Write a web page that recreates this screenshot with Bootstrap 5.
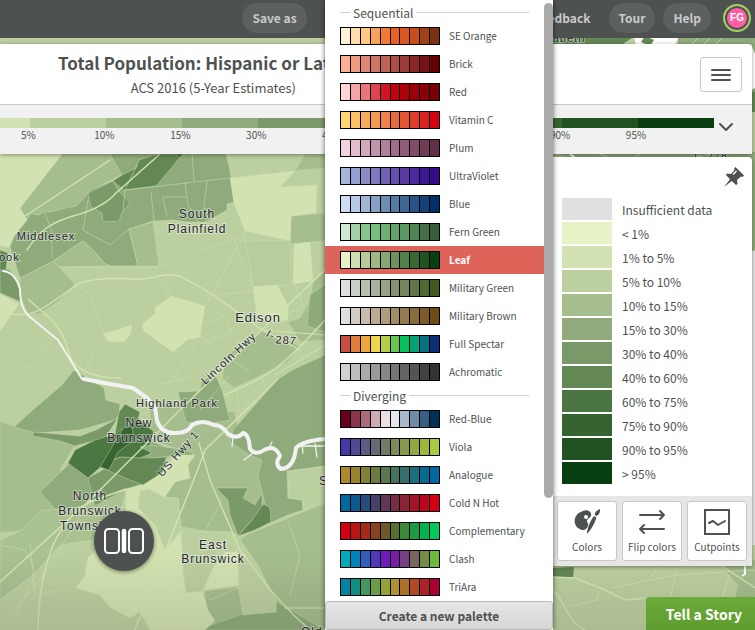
<!DOCTYPE html>
<html lang="en">
<head>
<meta charset="utf-8">
<meta name="viewport" content="width=device-width, initial-scale=1">
<title>Total Population: Hispanic or Latino</title>
<link href="https://cdn.jsdelivr.net/npm/bootstrap@5.3.0/dist/css/bootstrap.min.css" rel="stylesheet">
<style>
:root{--ink:#4d5250;--line:#c8c8c8}
body{font-family:"Noto Sans CJK SC","Open Sans",sans-serif;color:var(--ink);font-size:12px;line-height:16px;background:#bccf9f}
.app{isolation:isolate}
.map-layer{z-index:-1}
.map-layer text{font-family:"Liberation Sans",Arial,sans-serif;fill:#26262e;stroke:#ffffff70;stroke-width:2;paint-order:stroke;letter-spacing:1px}
.map-fade{z-index:-1;height:80px;background:linear-gradient(transparent,#00000018)}
.topbar{background:var(--ink);height:38px;padding-top:3px}
.pill{height:30px;line-height:16px;font-size:12px;font-weight:700;color:#c8cac9;background:#5c605f;border:0;border-radius:15px;padding:0 10px}
.pill-plain{background:none}
.avatar{width:28px;height:28px;border:2px solid #9bd35a;border-radius:50%;background:#ff5fa2;box-shadow:inset 0 0 0 2px var(--ink);color:#fff;font:bold 10px/14px "Liberation Sans",Arial,sans-serif}
.title-card{margin:6px 3px 0 0;border-radius:0 4px 0 0;box-shadow:0 1px 4px #0006}
.title-row{height:61px;border-bottom:1px solid var(--line)}
.map-title{font-size:17px;line-height:24px;font-weight:700}
.map-sub{font-size:13px;line-height:18px}
.menu-btn{width:42px;height:35px;margin-right:10px;border:1px solid var(--line);border-radius:3px;background:#fff}
.scale-row{background:#f1f1f1;height:49px;padding-top:13px}
.seg{height:10px;background:var(--c)}
.seg-wrap{flex:1 1 0}
.seg-wrap:first-child{flex-grow:.4}
.seg-label{width:36px;margin-right:-16px;font-size:10px;line-height:14px;text-align:center}
.scale-toggle{width:38px;background:none;border:0}
.legend-panel{width:200px;margin:3px 3px 0 auto;border-radius:0 4px 0 0;box-shadow:0 1px 4px #0006}
.legend-head{height:41px;padding:10px 8px}
.legend-rows{padding:0 10px 10px;margin:0}
.legend-rows li{height:24px;gap:10px}
.legend-chip{width:50px;height:22px;background:var(--c)}
.tools{background:#e6e6e6;padding:5px;gap:5px}
.tool{flex:1 1 0;height:60px;background:#fff;border:1px solid var(--line);border-radius:3px;font-size:10px;line-height:14px;color:var(--ink);padding:0}
.palette-menu{left:325px;width:228px;background:#fff;box-shadow:0 0 5px #0009;padding-top:3px;z-index:5}
.palette-list{margin-right:9px}
.group-title{height:19px;font-size:12px;line-height:18px;margin:0 15px}
.group-title::before,.group-title::after{content:"";height:1px;background:#d0d0d0;width:10px}
.group-title::after{flex:1}
.group-title span{padding:0 3px}
.pal{height:28px;border:0;background:none;padding:0 15px;gap:9px;font-size:10px;line-height:16px;color:var(--ink)}
.pal.active{background:#de6459;color:#fff;font-weight:700}
.strip{flex:0 0 100px;height:18px;border:1px solid #000}
.strip i{flex:1 1 0}
.strip i+i{border-left:1px solid #000}
.scroll-thumb{top:3px;right:0;width:9px;height:495px;border-radius:5px;background:#aaa}
.new-pal{height:29px;border:1px solid #bbb;border-radius:3px;background:linear-gradient(#e6e6e6,#d6d6d6);font-size:12px;line-height:18px;font-weight:700;color:var(--ink)}
.compare{left:94px;top:511px;width:60px;height:60px;border:0;border-radius:50%;background:var(--ink);box-shadow:0 1px 4px #0007}
.story{right:0;bottom:0;height:33px;border:0;border-radius:4px 0 0 0;background:linear-gradient(#6aab38,#5f9c30);color:#fff;font-size:14px;line-height:22px;font-weight:700;padding:0 13px 0 20px}
</style>
<script src="https://cdn.jsdelivr.net/npm/bootstrap@5.3.0/dist/js/bootstrap.bundle.min.js"></script>
</head>
<body>
<div class="app position-relative min-vh-100 overflow-hidden">
<svg class="map-layer position-absolute top-0 start-0 w-100 h-100" viewBox="0 0 755 630" preserveAspectRatio="xMinYMin slice" aria-label="Map of census areas">
<rect width="755" height="630" fill="#bccf9f"/>
<g stroke="#d0dfb5" stroke-width=".6" stroke-opacity=".7" stroke-linejoin="round">
<g fill="#a6bd8d">
<path d="M62 154H110L123 174 100 186 88 195 75 208 45 213 30 216 27 221 20 208Z"/>
<path d="M20 278L53 261 60 268 75 284 60 300 40 314 28 314 20 296Z"/>
<path d="M295 171L305 154H325V168ZM291 216L325 213V241L290 244Z"/>
<path d="M235 240L290 241 291 284 253 287 250 272 241 255Z" fill="#b9cc9c"/>
<path d="M313 281L325 270V340L300 342 288 322 300 318 310 300Z"/>
<path d="M226 356L262 330 300 346 288 362 262 375 234 388 222 378Z"/>
<path d="M0 421L35 433 75 445 60 470 90 500 68 520 60 540 38 536 28 543 20 531 0 533Z"/>
<path d="M20 531L42 510 66 509 100 488 126 490 120 515 92 540 60 545 36 572 0 600V540Z" fill="#aac191"/>
<path d="M150 400L180 404 235 412 240 440 262 460 264 475 272 520 240 536 230 532 205 531 181 527 178 498 165 497 168 480 195 455 150 440Z"/>
<path d="M246 535L325 503V630H300L278 605 258 565 240 540Z"/>
<path d="M203 591L239 587 243 610 277 602 300 630H205Z"/>
</g>
<g fill="#8fab7b">
<path d="M10 247L14 236 27 220 31 213 38 215 44 212 50 212 66 208 76 206 84 198 88 193 90 190 110 182 122 175 110 154H226L230 170 234 202 227 204 227 210 206 222 190 222 173 220 153 221 129 229 138 266H110L104 263 94 251 83 241 53 261 20 278Z"/>
<path d="M0 221H5L2 247 0 247Z"/>
<path d="M62 385L74 370 104 388 106 400 120 404 119 415 115 420 80 430 35 433 14 427 35 408Z"/>
<path d="M40 492L70 463 88 478 150 440 172 450 155 480 126 490 75 508 55 509Z"/>
<path d="M178 392L200 391 202 381 215 374 222 390 230 420 205 424 186 422Z"/>
<path d="M325 355L292 370 277 380 233 430 230 442 250 455 262 460 258 475 264 500 270 523 288 515 303 510 302 500 288 498 287 471 325 466Z"/>
<path d="M310 295L325 284V332L307 326ZM150 445L186 450 195 455 150 458Z"/>
<path d="M277 602L325 630H205L208 626 240 615Z"/>
</g>
<g fill="#a6bd8d">
<path d="M153 222L159 266H138L129 229ZM53 261L83 241 94 251 104 263 110 266 59 267Z"/>
</g>
<g fill="#d2e2b0">
<path d="M0 154H62L20 208 27 220 14 236 9 247 0 246Z"/>
<path d="M230 178L295 171 280 187 260 204 256 225 245 231 234 203ZM280 187L317 185 316 213 291 216 290 241 245 231 256 225 260 204Z"/>
<path d="M294 244L310 242 313 281 293 284ZM253 287L277 285 288 305 288 320 272 322 257 318Z"/>
<path d="M142 325L155 313V308L171 296 205 306 200 337 187 340 173 352 144 331ZM103 334L132 325 130 335 124 342 108 341Z"/>
<path d="M0 294L19 304 0 331Z"/>
<path d="M126 489L155 478 164 470 175 455H195L188 465 190 478 175 482 165 497 150 489 140 490 138 507 155 525 165 550 181 532 183 573 187 593 203 591 208 610 215 621 205 630H150L140 612 130 618 110 607 100 595 76 588 85 575 88 558 98 548 115 545 126 510Z"/>
</g>
<g fill="#bccf9f">
<path d="M140 492L148 489 165 498 178 498 181 530 165 550 155 525 138 508ZM181 532L230 532 222 552 215 555 210 590 186 593 183 573Z"/>
<path d="M289 476L294 471 325 466V500L304 509 302 500 288 498ZM232 535L246 550 276 600 276 612 243 615 238 585 237 552Z"/>
<path d="M236 388L268 374 250 400 240 415Z"/>
</g>
<path fill="#d2e2b0" d="M213 568L225 552 237 552 239 585 203 590Z"/>
<g fill="#7a9a69">
<path d="M88 193L113 181 118 190 130 203 122 212 119 221 103 222 102 213 91 207Z"/>
<path d="M0 268L10 270 19 285 21 302 0 293ZM33 432L80 436 96 430 118 418 105 438 75 446 60 441 33 436Z"/>
<path d="M88 478L112 465 143 484 126 489 95 506Z"/>
<path d="M216 488L248 488 243 498 255 505 262 493 262 510 252 520 238 536 230 515 228 500Z"/>
</g>
<g fill="#638854">
<path d="M113 181L122 175 136 168 139 160 158 154H183L156 186 124 190Z"/>
<path d="M0 250L8 253 6 270H0ZM119 412L125 404 140 412 135 428 115 434Z"/>
<path d="M100 467L120 457 150 458 166 457 163 472 143 485 125 478Z"/>
<path d="M238 536L252 520 262 506 264 504 270 508 271 522 255 530Z"/>
</g>
<g fill="#4b7742"><path d="M68 463L75 450 95 440 115 434 138 418 154 432 150 445 140 447 152 453 140 458 120 457 103 465 88 478ZM175 154H183L180 158Z"/></g>
<path fill="#376431" d="M100 467L124 427 132 426 134 440 118 452 109 470Z"/>
</g>
<g fill="none" stroke="#d1dfb4" stroke-opacity=".75" stroke-width=".7">
<path d="M0 190L20 207M125 190L230 178M192 154L194 181M185 182L188 205 200 225M151 192L154 220M163 197H186M163 197L167 217M207 182L204 205 206 222M45 213L52 232V258M88 200L83 230 110 245 129 229M137 165L125 190 123 212M59 267H158L153 272 171 296M243 234L250 265 253 287M241 240L212 295 205 306M205 295L253 292M160 266L243 236M75 284L90 295 102 330 108 341M99 341L85 370 73 370M4 382L24 365 30 368 52 341 39 328M191 377L155 385M165 390L200 337 215 345M205 325L225 315 232 332 205 342M295 284L303 307 287 314M230 375L200 410M250 372L232 360M0 545L25 550 36 572 15 618M90 500L58 552 40 580 0 625M30 543L35 595 60 590M288 522L300 555 290 595M203 591L210 600 240 587M222 500L205 531M165 550L185 570M140 612L155 595 185 575"/>
</g>
<g fill="none" stroke="#d3e3b0" stroke-linecap="round">
<path stroke-width="1.4" d="M0 311Q25 320 45 307L80 283Q98 277 135 279C155 280 160 272 180 276L212 294 262 330 300 350M0 228L27 215 110 160M27 250C40 230 50 222 80 214Q105 206 116 193L160 154M28 299C50 320 60 320 70 356Q80 378 121 378"/>
<path stroke-width="1.4" d="M325 270L270 322 180 410 90 500 0 582M325 320C280 370 270 375 225 395M277 380L205 450C195 480 160 560 135 630M199 443L210 480 240 550C255 570 275 600 310 630M126 489L90 502Q40 530 38 630"/>
<path stroke-width="1" d="M325 345Q300 360 275 375M262 330L325 335M285 608H325"/>
</g>
<g fill="none" stroke="#f2f2f2" stroke-linecap="round" stroke-linejoin="round">
<path stroke-width="2" d="M3 271Q15 272 20 289 20 309 30 317L58 340 82 379 105 384"/>
<path stroke-width="4" d="M84 379L110 384 133 388 147 398 155 407 157 421Q162 434 176 433 188 433 192 425 202 419 214 425 222 425 228 434 237 440 243 433 249 434 250 449 256 456 264 450 275 444 280 456 274 464 281 469 294 468 296 448 302 441 325 439"/>
<path stroke-width="1.3" d="M300 446H325M233 438L232 446M253 453L244 460M268 450L272 442M302 444L303 453M315 444L317 457"/>
</g>
<g>
<path fill="#638854" d="M553 36H635L620 46H553Z"/><path fill="#fff" d="M634 36H680L674 46H636Z"/><path fill="#638854" d="M645 36L654 40 650 46 641 42Z"/><path fill="#8fab7b" d="M678 36H755V100H678Z"/><path fill="#8fab7b" d="M553 152H755V250L745 254H553Z"/><path fill="#e4e4e4" d="M748 251H755V545H748Z"/><path fill="#fff" d="M755 54L751 44V90L755 88Z"/>
<path fill="#638854" d="M752 92H755V112H752ZM553 568L574 567 573 577 553 577Z"/>
<path fill="#a6bd8d" d="M755 560V600H735L738 585 722 566ZM553 153L580 160H553Z"/>
<g fill="none" stroke="#d3e3b0"><path stroke-width="1.5" d="M553 577L575 578 605 590 625 600 645 598M553 590C565 600 565 620 585 630M722 566L755 588"/><path stroke-width=".7" d="M600 590L596 600 570 607M612 588L675 575 755 570M677 567L670 600M660 567L650 577M730 575L722 598M600 154L620 162M640 154L625 164M700 36L690 46M712 36L702 46M724 36L714 46"/></g>
<path fill="none" stroke="#fff" stroke-width="2" d="M745 566V574L742 576M570 154L578 160"/>
</g>
<g font-size="12" text-anchor="middle">
<text x="46" y="240" font-size="11">Middlesex</text><text x="-1" y="261" text-anchor="start" font-size="11">ook</text>
<text x="197" y="218">South</text><text x="197" y="233">Plainfield</text><text x="258" y="322" font-size="13">Edison</text>
<text x="177" y="407" font-size="11">Highland Park</text><text x="139" y="427">New</text><text x="139" y="442">Brunswick</text>
<text x="90" y="500">North</text><text x="90" y="515">Brunswick</text><text x="60" y="530" text-anchor="start">Township</text>
<text x="213" y="549">East</text><text x="213" y="563">Brunswick</text><text x="319" y="485" text-anchor="start">Sayreville</text>
<text x="301" y="636" text-anchor="start">Old Bridge</text><text x="531" y="42" text-anchor="start" font-size="11">Elizabeth</text>
<g font-size="11" style="letter-spacing:0"><text transform="translate(231 361) rotate(-43)">Lincoln Hwy</text><text transform="translate(181 456) rotate(-49)">US Hwy 1</text><text transform="translate(269 338) rotate(32)">I-</text><text transform="translate(286 344) rotate(4)">287</text><text x="711" y="160">I- 278</text></g>
</g>
</svg>
<div class="map-fade position-absolute bottom-0 start-0 w-100"></div>

<nav class="topbar d-flex align-items-start" aria-label="Main">
<div class="col-5 pe-2 text-end"><button class="pill" type="button">Save as</button></div>
<div class="d-flex align-items-center ms-auto pe-1">
<button class="pill pill-plain me-2" type="button">Feedback</button>
<button class="pill me-2" type="button">Tour</button>
<button class="pill me-2" type="button">Help</button>
<button class="avatar p-0 mx-1 me-0" type="button">FG</button>
</div>
</nav>

<header class="title-card bg-white">
<div class="title-row d-flex align-items-center">
<div class="col-7 pe-2 text-center">
<h1 class="map-title mb-1 me-3">Total Population: Hispanic or Latino</h1>
<p class="map-sub mb-0 me-1">ACS 2016 (5-Year Estimates)</p>
</div>
<button class="menu-btn ms-auto p-0" type="button" aria-label="Menu"><svg width="22" height="14" viewBox="0 0 22 14" fill="none" stroke="#4d5250" stroke-width="2" stroke-linecap="round"><path d="M2 2H20M2 7H20M2 12H20"/></svg></button>
</div>
<div class="scale-row d-flex align-items-start">
<div id="scale" class="d-flex flex-grow-1"></div>
<button class="scale-toggle p-0" type="button" aria-label="Expand legend"><svg class="d-block" width="24" height="18" viewBox="0 0 24 18" fill="none" stroke="#4d5250" stroke-width="2" stroke-linecap="round" stroke-linejoin="round"><path d="M6 6L12 12 18 6"/></svg></button>
</div>
</header>

<section class="legend-panel bg-white" aria-label="Legend">
<div class="legend-head text-end"><button class="border-0 bg-transparent p-0 d-inline-block" type="button" aria-label="Pin legend"><svg class="d-block" width="20" height="20" viewBox="0 0 20 20"><path fill="#4d5250" d="M11.500 0L20 8.500 18.500 10 17 9.500 13 13 13.500 17 12 18 7.800 14 0 20 6 12.200 2 8 3 6.500 7 7 10.500 3 10 1.500Z"/><path fill="none" stroke="#fff" stroke-width="1.500" d="M9 7.500L12.500 4"/></svg></button></div>
<ul id="legend" class="legend-rows list-unstyled"></ul>
<div class="tools d-flex">
<button class="tool" type="button"><svg class="d-block mx-auto mb-1" width="28" height="28" viewBox="0 0 28 28" fill="#4d5250"><path fill-rule="evenodd" d="M10 3C15 1 19 4 18 8 17 10 14 11 14 13 14 15 16 15 15 18 13 23 9 23 5 20 0 16 0 6 10 3ZM13 7A2 2 0 1 0 13.100 7Z"/><path d="M27 1C27.500 4 26 7 23.500 8L21.500 6.500C22 4 24 2 27 1ZM21 8L23.500 9.500C22 15 18 22 14 26 14 21 17 13 21 8Z"/></svg>Colors</button>
<button class="tool" type="button"><svg class="d-block mx-auto mb-1" width="28" height="28" viewBox="0 0 28 28" fill="none" stroke="#4d5250" stroke-width="2" stroke-linecap="round" stroke-linejoin="round"><path d="M2 7H26M22 3L26 7 22 11M26 21H2M6 17L2 21 6 25"/></svg>Flip colors</button>
<button class="tool" type="button"><svg class="d-block mx-auto mb-1" width="28" height="28" viewBox="0 0 28 28" fill="none" stroke="#4d5250" stroke-width="2"><rect x="2" y="2" width="24" height="24"/><path stroke-linecap="round" stroke-linejoin="round" d="M6 15L10 13 15 17 22 13"/></svg>Cutpoints</button>
</div>
</section>

<aside class="palette-menu position-absolute top-0 bottom-0 d-flex flex-column" aria-label="Color palettes">
<div id="palettes" class="palette-list flex-grow-1"></div>
<div class="scroll-thumb position-absolute"></div>
<button class="new-pal w-100" type="button">Create a new palette</button>
</aside>

<button class="compare position-absolute p-0" type="button" aria-label="Compare maps"><svg width="42" height="28" viewBox="0 0 42 28" fill="none" stroke="#fff" stroke-width="2"><rect x="2" y="2" width="14" height="24" rx="3.500"/><rect x="26" y="2" width="14" height="24" rx="3.500"/><path stroke-width="4.500" stroke-linecap="round" d="M21 4V24"/></svg></button>
<button class="story position-absolute" type="button">Tell a Story</button>
</div>

<script>
const steps = [["Insufficient data","#e0e0e0"],["< 1%","#e7f3c6"],["1% to 5%","#d2e2b2"],["5% to 10%","#bccf9f"],["10% to 15%","#a6bd8d"],["15% to 30%","#90aa7b"],["30% to 40%","#7a9969"],["40% to 60%","#638854"],["60% to 75%","#4b7641"],["75% to 90%","#366431"],["90% to 95%","#215221"],["> 95%","#073f10"]];
const esc = s => s.replace("<", "&lt;").replace(">", "&gt;");
document.getElementById("legend").innerHTML = steps.map(([t, c]) =>
  `<li class="d-flex"><span class="legend-chip" style="--c:${c}"></span><span class="pt-1">${esc(t)}</span></li>`).join("");

const marks = ["5%","10%","15%","30%","40%","60%","75%","90%","95%",""];
document.getElementById("scale").innerHTML = marks.map((m, i) =>
  `<div class="seg-wrap"><div class="seg" style="--c:${steps[i + 2][1]}"></div><div class="d-flex justify-content-end"><span class="seg-label flex-shrink-0">${m}</span></div></div>`).join("");

const groups = {
  Sequential: {
    "SE Orange": "fff1d6 ffdcae ffc985 f6a25e ef7b35 e86023 da5721 c64e1d a14117 7b3210",
    "Brick": "ffad94 f09a82 de8772 cf7664 bf6356 ae4f47 9d3a38 8b2628 7a1116 670004",
    "Red": "ffd6d8 f5a5a9 e9747a dc454d cf1524 bf000d ad000a 9b0008 890006 760004",
    "Vitamin C": "ffd673 fcc268 f8ad5e f49854 f0814a eb693d e55432 df3c28 d9231d d30412",
    "Plum": "f1d1df e2bccf d1a8bc c194ab b18099 a06e88 905c77 804c66 703c55 623046",
    "UltraViolet": "a3b7dc 969fd1 8a8cc8 7d78bf 7063b6 664fad 593ba5 4c289c 401793 350a8b",
    "Blue": "ccddf1 b5cae3 9fb7d5 85a2c6 6d8eb4 567ca5 3d6896 265487 114278 003067",
    "Fern Green": "d0e8d2 a0d1a4 85c68c 76bd7f 6bb174 62a56a 599860 4e8653 446f47 385b3a",
    "Leaf": "e7f3c6 d0e1b1 b7cc9a 9fb985 86a672 6d925e 54804a 396832 215321 073f10",
    "Military Green": "dedede cccfc7 bac0b0 a8b19a 97a385 859470 73865b 617646 506832 40591f",
    "Military Brown": "dedede d2ccc4 c7bcab baac93 ae9c7c a18c66 937c50 886d3c 7b5c27 6e4c15",
    "Full Spectar": "c64e42 e07d3a efa63b f0d348 b2cc4b 67c653 04c35c 06a277 067086 0b2e75",
    "Achromatic": "d1d1d1 bebebe ababab 999999 878787 767676 656565 545454 434343 333333"
  },
  Diverging: {
    "Red-Blue": "68001d 8a354b ac6b7a ceabb4 ebdfe3 e2e8ec aab9ca 6f8ba8 385e83 003159",
    "Viola": "4537a7 504a95 5b5b83 656a75 717c67 7c8b59 87994c 91a742 9cb73c a9ca40",
    "Analogue": "ac882c 96842f 828036 6c7c40 597852 447560 30716d 1b6e7e 066a8f 0067a1",
    "Cold N Hot": "0067a1 0d588f 294c7d 45416a 603758 782d47 8e2137 a51328 bc061b d30011",
    "Complementary": "d30011 bc1415 a52b19 8b4221 70572a 57702f 3d8739 1b9b46 04b250 00c85a",
    "Clash": "00aab8 0085ba 315fba 5138ba 6e1bba 771ea9 774083 76665e 728e42 70b83b",
    "TriAra": "0084a1 108c80 43965f 6a9d45 96a136 ae9230 b06f29 b04926 ad232b aa0033"
  }
};
document.getElementById("palettes").innerHTML = Object.entries(groups).map(([g, list]) =>
  `<div class="group-title d-flex align-items-center"><span>${g}</span></div>` +
  Object.entries(list).map(([name, colors]) =>
    `<button type="button" class="pal d-flex align-items-center w-100${name === "Leaf" ? " active" : ""}"><span class="strip d-flex">${colors.split(" ").map(c => `<i style="background:#${c}"></i>`).join("")}</span><span>${name}</span></button>`).join("")).join("");
</script>
</body>
</html>
